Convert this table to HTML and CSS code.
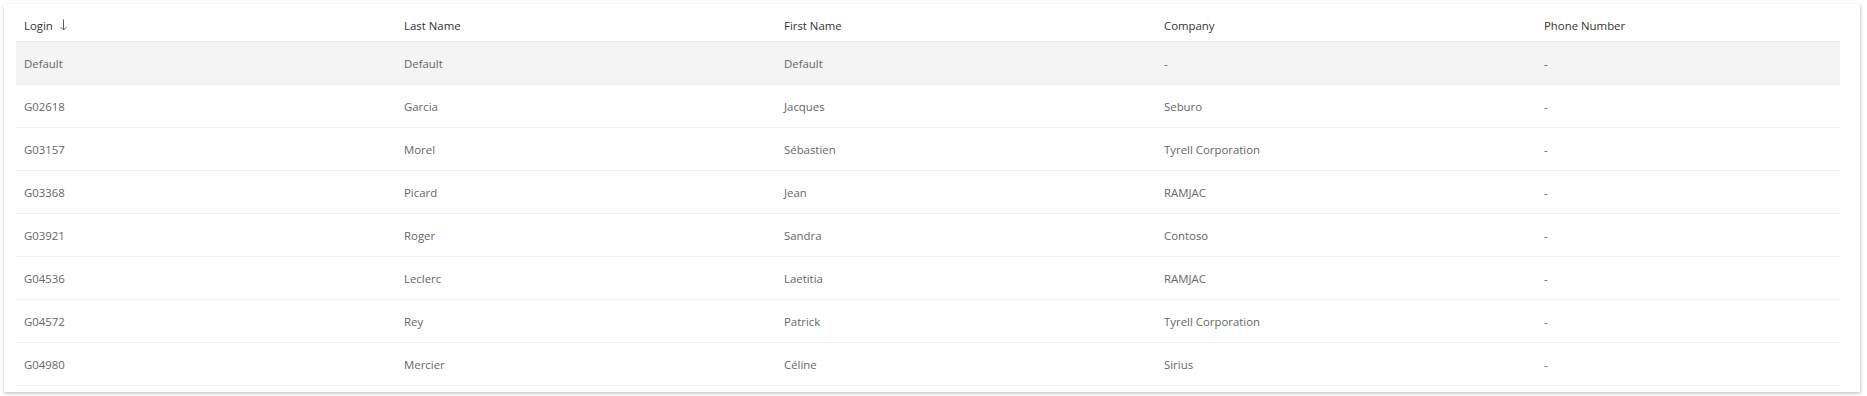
FILE: index.html
```html
<!DOCTYPE html>
<html lang="en">
<head>
<meta charset="utf-8">
<title>Users</title>
<link rel="stylesheet" href="styles.css">
</head>
<body>
<div class="card">
  <table class="grid">
    <colgroup>
      <col class="c">
      <col class="c">
      <col class="c">
      <col class="c">
      <col>
    </colgroup>
    <thead>
      <tr>
        <th><span class="sort">Login<svg class="arrow" width="7" height="12" viewBox="0 0 7 12"><path d="M3.5 0.5V11M0.7 8.2L3.5 11L6.3 8.2" fill="none" stroke="#605e5c" stroke-width="1"/></svg></span></th>
        <th>Last Name</th>
        <th>First Name</th>
        <th>Company</th>
        <th>Phone Number</th>
      </tr>
    </thead>
    <tbody>
      <tr class="active"><td>Default</td><td>Default</td><td>Default</td><td>-</td><td>-</td></tr>
      <tr><td>G02618</td><td>Garcia</td><td>Jacques</td><td>Seburo</td><td>-</td></tr>
      <tr><td>G03157</td><td>Morel</td><td>Sébastien</td><td>Tyrell Corporation</td><td>-</td></tr>
      <tr><td>G03368</td><td>Picard</td><td>Jean</td><td>RAMJAC</td><td>-</td></tr>
      <tr><td>G03921</td><td>Roger</td><td>Sandra</td><td>Contoso</td><td>-</td></tr>
      <tr><td>G04536</td><td>Leclerc</td><td>Laetitia</td><td>RAMJAC</td><td>-</td></tr>
      <tr><td>G04572</td><td>Rey</td><td>Patrick</td><td>Tyrell Corporation</td><td>-</td></tr>
      <tr><td>G04980</td><td>Mercier</td><td>Céline</td><td>Sirius</td><td>-</td></tr>
    </tbody>
  </table>
</div>
</body>
</html>
```

FILE: styles.css
```css
html, body {
  margin: 0;
  padding: 0;
  background: #ffffff;
}

body {
  padding: 4px 7px 5px 4px;
  font-family: "Open Sans", "Noto Sans", sans-serif;
  font-size: 11.4px;
  color: #666666;
}

.card {
  background: #ffffff;
  padding: 5px 20px 6px 12px;
  box-shadow: 0 1.6px 3.6px rgba(0, 0, 0, 0.16), 0 0.3px 0.9px rgba(0, 0, 0, 0.12), 1px 1px 3px rgba(0, 0, 0, 0.12);
}

.grid {
  width: 100%;
  border-collapse: collapse;
  table-layout: fixed;
}

.grid col.c {
  width: 380px;
}

.grid th {
  height: 32px;
  padding: 0 8px;
  text-align: left;
  font-weight: 400;
  color: #333333;
  border-bottom: 1px solid #ebebeb;
  white-space: nowrap;
}

.grid td {
  height: 42px;
  padding: 0 8px;
  border-bottom: 1px solid #f2f2f2;
  white-space: nowrap;
}

.grid tr.active td {
  background: #f4f4f4;
}

.sort {
  display: inline-flex;
  align-items: center;
  gap: 7px;
}

.arrow {
  display: block;
}
```
